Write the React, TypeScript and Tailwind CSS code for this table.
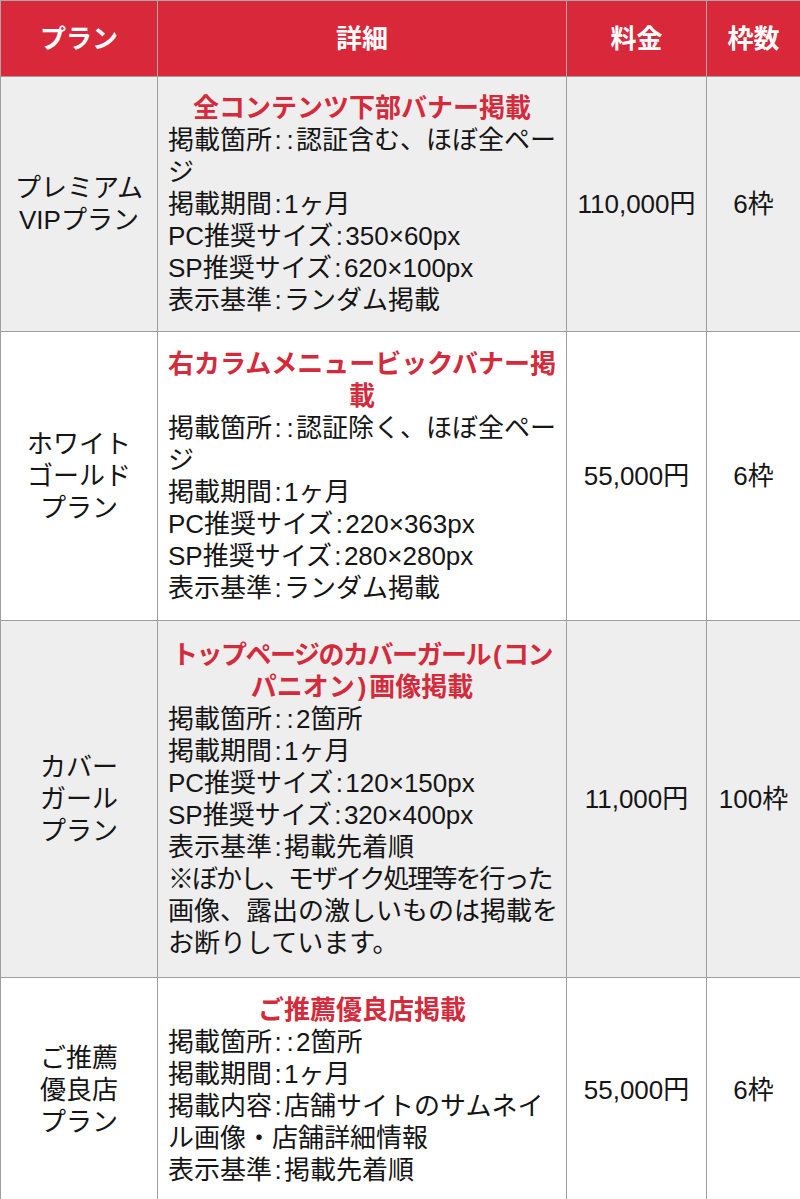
import { ReactNode } from 'react'

type Plan = {
  name: string[]
  title: ReactNode[]
  lines: ReactNode[]
  price: string
  slots: string
  shaded: boolean
}

const C = () => <span className="inline-block w-[12px] text-center">:</span>

const plans: Plan[] = [
  {
    name: ['プレミアム', 'VIPプラン'],
    title: ['全コンテンツ下部バナー掲載'],
    lines: [
      <>掲載箇所<C /><C />認証含む、ほぼ全ペー</>,
      'ジ',
      <>掲載期間<C />1ヶ月</>,
      <>PC推奨サイズ<C />350×60px</>,
      <>SP推奨サイズ<C />620×100px</>,
      <>表示基準<C />ランダム掲載</>,
    ],
    price: '110,000円',
    slots: '6枠',
    shaded: true,
  },
  {
    name: ['ホワイト', 'ゴールド', 'プラン'],
    title: ['右カラムメニュービックバナー掲', '載'],
    lines: [
      <>掲載箇所<C /><C />認証除く、ほぼ全ペー</>,
      'ジ',
      <>掲載期間<C />1ヶ月</>,
      <>PC推奨サイズ<C />220×363px</>,
      <>SP推奨サイズ<C />280×280px</>,
      <>表示基準<C />ランダム掲載</>,
    ],
    price: '55,000円',
    slots: '6枠',
    shaded: false,
  },
  {
    name: ['カバー', 'ガール', 'プラン'],
    title: [
      <span className="tracking-[-1.5px]">トップページのカバーガール<span className="mx-[3px]">(</span>コン</span>,
      <>パニオン<span className="mx-[3px]">)</span>画像掲載</>,
    ],
    lines: [
      <>掲載箇所<C /><C />2箇所</>,
      <>掲載期間<C />1ヶ月</>,
      <>PC推奨サイズ<C />120×150px</>,
      <>SP推奨サイズ<C />320×400px</>,
      <>表示基準<C />掲載先着順</>,
      <span className="tracking-[-2px]">※ぼかし、モザイク処理等を行った</span>,
      '画像、露出の激しいものは掲載を',
      'お断りしています。',
    ],
    price: '11,000円',
    slots: '100枠',
    shaded: true,
  },
  {
    name: ['ご推薦', '優良店', 'プラン'],
    title: ['ご推薦優良店掲載'],
    lines: [
      <>掲載箇所<C /><C />2箇所</>,
      <>掲載期間<C />1ヶ月</>,
      <>掲載内容<C />店舗サイトのサムネイ</>,
      'ル画像・店舗詳細情報',
      <>表示基準<C />掲載先着順</>,
    ],
    price: '55,000円',
    slots: '6枠',
    shaded: false,
  },
]

const headers = ['プラン', '詳細', '料金', '枠数']

export default function App() {
  return (
    <div className="w-[800px] overflow-hidden bg-white font-['Liberation_Sans','Noto_Sans_CJK_JP',sans-serif] text-[26px] leading-[32px] text-[#151515]">
      <div className="grid grid-cols-[157px_409px_140px_94px] grid-rows-[76px_255px_289px_357px_224px]">
        {headers.map(h => (
          <div
            key={h}
            className="flex items-center justify-center border-l border-t border-[#a8a8a8] bg-[#d8283a] font-bold text-white"
          >
            {h}
          </div>
        ))}

        {plans.map((p, i) => {
          const bg = p.shaded ? 'bg-[#eeeeee]' : 'bg-white'
          return (
            <div key={i} className="contents">
              <div className={`flex flex-col items-center justify-center border-l border-t border-[#9e9e9e] text-center ${bg}`}>
                {p.name.map(n => (
                  <div key={n}>{n}</div>
                ))}
              </div>
              <div className={`flex flex-col justify-center whitespace-nowrap border-l border-t border-[#9e9e9e] px-[10px] ${bg}`}>
                {p.title.map((t, j) => (
                  <div key={j} className="text-center font-bold text-[#d42b3c]">
                    {t}
                  </div>
                ))}
                {p.lines.map((l, j) => (
                  <div key={j}>{l}</div>
                ))}
              </div>
              <div className={`flex items-center justify-center border-l border-t border-[#9e9e9e] ${bg}`}>
                {p.price}
              </div>
              <div className={`flex items-center justify-center border-l border-t border-[#9e9e9e] ${bg}`}>
                {p.slots}
              </div>
            </div>
          )
        })}
      </div>
    </div>
  )
}
